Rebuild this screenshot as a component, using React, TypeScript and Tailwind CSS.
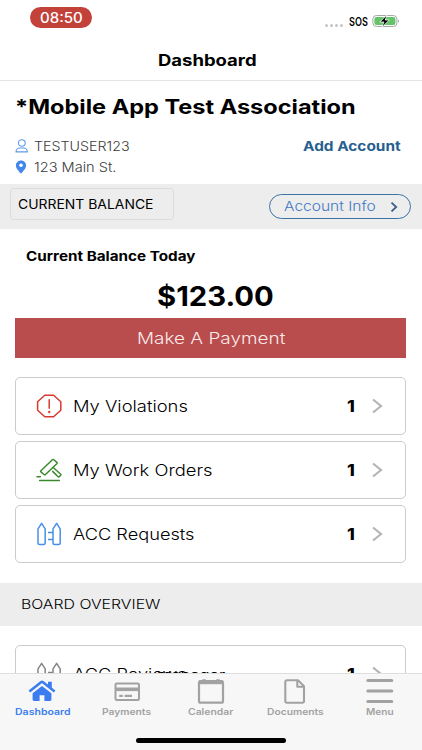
import { useLayoutEffect, useRef, useState } from 'react';
import type { ReactNode } from 'react';

// Extended-width text: stretches its content horizontally to fill `width` px.
function Wide({ width, className = '', children }: {
  width: number;
  className?: string;
  children: ReactNode;
}) {
  const ref = useRef<HTMLSpanElement>(null);
  const [scale, setScale] = useState(1);

  useLayoutEffect(() => {
    if (ref.current) setScale(width / ref.current.offsetWidth);
  }, [width]);

  return (
    <span className={`block shrink-0 text-left whitespace-nowrap ${className}`} style={{ width }}>
      <span ref={ref} className="inline-block origin-left" style={{ transform: `scaleX(${scale})` }}>
        {children}
      </span>
    </span>
  );
}

const rows = [
  { label: 'My Violations', width: 115, count: 1, icon: <ViolationIcon /> },
  { label: 'My Work Orders', width: 140, count: 1, icon: <GavelIcon /> },
  { label: 'ACC Requests', width: 121, count: 1, icon: <FenceIcon className="text-[#4a8fe7]" /> },
];

const tabs = [
  { label: 'Dashboard', width: 55, active: true, icon: <HomeIcon /> },
  { label: 'Payments', width: 49, icon: <CardIcon /> },
  { label: 'Calendar', width: 45, icon: <CalendarIcon /> },
  { label: 'Documents', width: 57, icon: <DocumentIcon /> },
  { label: 'Menu', width: 28, icon: <MenuIcon /> },
];

export default function App() {
  return (
    <div className="flex h-[750px] w-[422px] flex-col overflow-hidden bg-white font-['Inter',sans-serif] text-black">
      <StatusBar />
      <header className="flex h-[41px] shrink-0 items-center justify-center border-b border-[#e4e4e4] pt-px pr-[7px]">
        <Wide width={99} className="text-[15.5px] leading-5 font-bold">Dashboard</Wide>
      </header>

      <main className="min-h-0 flex-1 overflow-hidden">
        <section className="h-[103px] pt-[14px] pr-[21px] pl-[15px]">
          <Wide width={341} className="text-[20px] leading-6 font-bold">*Mobile App Test Association</Wide>
          <div className="mt-[17px] flex h-5 items-center justify-between">
            <div className="flex items-center gap-[6px]">
              <UserIcon />
              <Wide width={96} className="text-[13.5px] leading-5 font-[350] text-[#3c3c3c]">TESTUSER123</Wide>
            </div>
            <Wide width={98} className="text-[13.5px] leading-5 font-bold text-[#27608f]">Add Account</Wide>
          </div>
          <div className="flex h-[21px] items-center gap-[6px]">
            <PinIcon />
            <Wide width={82} className="text-[13.5px] leading-5 font-[350] text-[#3c3c3c]">123 Main St.</Wide>
          </div>
        </section>

        <section className="flex h-[45px] items-center justify-between bg-[#ededed] pr-[11px] pl-[10px]">
          <div className="mb-[5px] flex h-8 w-[164px] items-center rounded-[4px] border border-[#dcdcdc] pl-[7px]">
            <Wide width={135} className="text-[13px] leading-5">CURRENT BALANCE</Wide>
          </div>
          <button className="flex h-[25px] w-[142px] items-center justify-between rounded-full border border-[#3b74a8] pr-[12px] pl-[14px]">
            <Wide width={92} className="mb-px text-[13.5px] leading-5 font-light text-[#3f78c4]">Account Info</Wide>
            <svg className="h-[10px] w-[8px]" viewBox="0 0 8 10" fill="none" stroke="#3c6187" strokeWidth="1.8">
              <path d="M1.5 .6 6.200 5 1.500 9.400" />
            </svg>
          </button>
        </section>

        <section className="px-[15px] pt-[17px]">
          <Wide width={170} className="ml-[10.5px] text-[13px] leading-5 font-bold">Current Balance Today</Wide>
          <Wide width={117} className="mt-[14px] ml-[142px] text-[27.5px] leading-8 font-bold">$123.00</Wide>
          <button className="mt-[6px] flex h-10 w-[391px] items-center justify-center bg-[#b94c4d]">
            <Wide width={148} className="text-[16px] leading-6 font-light text-[#fbeaea]">Make A Payment</Wide>
          </button>
          <div className="mt-[19px] flex flex-col gap-[6px]">
            {rows.map((row) => (
              <Row key={row.label} icon={row.icon} count={row.count}>
                <Wide width={row.width} className="text-[15.5px] leading-6 font-[350]">{row.label}</Wide>
              </Row>
            ))}
          </div>
        </section>

        <section className="mt-5 flex h-[43px] items-center bg-[#ededed] pb-px pl-[20.5px]">
          <Wide width={139} className="text-[13px] leading-5 font-light">BOARD OVERVIEW</Wide>
        </section>

        <section className="px-[15px] pt-[19px]">
          <Row icon={<FenceIcon className="text-[#858585]" />} count={1}>
            <div className="relative">
              <Wide width={114} className="text-[15.5px] leading-6 font-[350]">ACC Reviews</Wide>
              <Wide width={68} className="absolute top-0 left-[84px] text-[13px] leading-6">manager</Wide>
            </div>
          </Row>
        </section>
      </main>

      <TabBar />
    </div>
  );
}

function StatusBar() {
  return (
    <div className="flex h-[40px] shrink-0 items-start justify-between pt-[7px] pr-[22px] pl-[30px]">
      <div className="flex h-[21px] w-[62px] items-center justify-center rounded-full bg-[#c2423a]">
        <Wide width={43} className="text-[14px] leading-5 font-medium text-white">08:50</Wide>
      </div>
      <div className="mt-[4px] flex h-5 items-center">
        <div className="mt-[8px] flex gap-[2px]">
          {[0, 1, 2, 3].map((i) => (
            <span key={i} className="h-[3px] w-[3px] rounded-full bg-[#c4c4c4]" />
          ))}
        </div>
        <Wide width={19} className="ml-[6px] pt-px text-[11.5px] leading-5 font-semibold">SOS</Wide>
        <svg className="ml-[4px] h-[14px] w-[28px]" viewBox="0 0 28 14">
          <rect x="0.9" y="1.5" width="24" height="11" rx="3.5" fill="#fff" stroke="#a5a9a5" />
          <rect x="2.4" y="3" width="21" height="8" rx="2" fill="#62c466" />
          <path d="M26 5.2c1.300.5 1.300 3.100 0 3.600z" fill="#a5a9a5" />
          <path d="M15 .8 7.800 8h4l-1.800 5.300L17.300 6h-4z" fill="#000" stroke="#fff" strokeWidth=".8" />
        </svg>
      </div>
    </div>
  );
}

function Row({ icon, count, children }: { icon: ReactNode; count: number; children: ReactNode }) {
  return (
    <div className="flex h-[58px] w-[391px] items-center rounded-[5px] border border-[#cbcbcb] pr-[22px] pl-[19.5px]">
      <div className="mr-[10px] flex w-[27px] justify-center">{icon}</div>
      <div className="mt-px">{children}</div>
      <Wide width={8} className="mt-px ml-auto text-[15.5px] leading-6 font-extrabold">{count}</Wide>
      <svg className="ml-[16px] h-4 w-[12px]" viewBox="0 0 12 16" fill="none" stroke="#b5b5b5" strokeWidth="2.200">
        <path d="M2 1.500 10 8l-8 6.500" />
      </svg>
    </div>
  );
}

function TabBar() {
  return (
    <nav className="h-[77px] shrink-0 border-t border-[#dedede] bg-[#f7f7f7]">
      <div className="grid h-[45px] grid-cols-5">
        {tabs.map((tab) => (
          <div
            key={tab.label}
            className={`flex flex-col items-center pt-[4px] ${tab.active ? 'text-[#3b7cf0]' : 'text-[#a2a2a2]'}`}
          >
            {tab.icon}
            <Wide width={tab.width} className="text-[9px] leading-[14px] font-semibold">{tab.label}</Wide>
          </div>
        ))}
      </div>
      <div className="mx-auto mt-[19px] h-[5px] w-[150px] rounded-full bg-black" />
    </nav>
  );
}

function UserIcon() {
  return (
    <svg className="h-[14px] w-[13px]" viewBox="0 0 13 14" fill="none" stroke="#5c9bea" strokeWidth="1.100">
      <ellipse cx="6.800" cy="4" rx="3.400" ry="3.200" />
      <path d="M1 12.900c0-2.400 1.600-3.900 3.900-3.900h3.600c2.300 0 3.900 1.500 3.900 3.900z" strokeLinejoin="round" />
    </svg>
  );
}

function PinIcon() {
  return (
    <svg className="h-[14px] w-[13px]" viewBox="0 0 13 14">
      <path d="M6 .5C3 .5.900 2.700.900 5.400.900 8.300 4 11 5.400 13.100c.3.500.9.500 1.200 0C8 11 11.100 8.300 11.100 5.400 11.100 2.700 9 .5 6 .5z" fill="#4287ec" />
      <ellipse cx="6" cy="5.200" rx="1.800" ry="1.700" fill="#fff" />
    </svg>
  );
}

function ViolationIcon() {
  return (
    <svg className="h-6 w-[27px]" viewBox="0 0 27 24" fill="none" stroke="#d63a2c" strokeWidth="1.500">
      <path d="M8.800 1.200h8.800l7.200 6.500v8.600l-7.200 6.500H8.800l-7.200-6.500V7.700z" strokeLinejoin="round" />
      <path d="M13.200 5.800v8.400" strokeLinecap="round" />
      <circle cx="13.200" cy="18" r="1" fill="#d63a2c" strokeWidth=".6" />
    </svg>
  );
}

function GavelIcon() {
  return (
    <svg className="h-6 w-[27px]" viewBox="0 0 27 24" fill="none" stroke="#3a8a2c" strokeWidth="1.500" strokeLinejoin="round" strokeLinecap="round">
      <path d="M4.900 12.700 16.400 1.800q.7-.6 1.400 0l3 2.600q.7.600 0 1.300L9.500 16.500q-.7.600-1.400 0l-3.200-2.600q-.6-.6 0-1.200z" />
      <path d="M17.200 9.500 24.500 16c.6.500.6 1 0 1.500l-1 1c-.5.500-1 .5-1.600 0l-5.300-5.100" />
      <path d="M1 18.800h3.400M3.600 22.600h19.700" />
    </svg>
  );
}

function FenceIcon({ className }: { className: string }) {
  return (
    <svg className={`h-6 w-[27px] ${className}`} viewBox="0 0 27 24" fill="none" stroke="currentColor" strokeWidth="1.500" strokeLinejoin="round">
      <path d="M2 6.800 5.600 1.300l3.600 5.500v14.200c0 1-.5 1.500-1.500 1.500H3.500C2.500 22.500 2 22 2 21z" />
      <path d="M17 6.800l3.600-5.500 3.600 5.500v14.200c0 1-.5 1.500-1.500 1.500h-4.200c-1 0-1.500-.5-1.500-1.500z" />
      <path d="M12 10.500h5M12 17.500h5" />
    </svg>
  );
}

function HomeIcon() {
  return (
    <svg className="h-[27px] w-7" viewBox="0 0 28 27" fill="currentColor">
      <path d="M14 8 23.400 15.300v6.300q0 1.400-1.400 1.400h-5.600v-5.800h-4.800V23H6q-1.400 0-1.400-1.400v-6.300z" />
      <path d="M1.400 13.600 13 4.300q1-.8 2 0l11.600 9.300" fill="none" stroke="currentColor" strokeWidth="2.600" />
      <path d="M20 3.800h3.800v8.400L20 9.200z" />
    </svg>
  );
}

function CardIcon() {
  return (
    <svg className="h-[27px] w-7" viewBox="0 0 28 27" fill="none" stroke="currentColor">
      <rect x="2.500" y="5.500" width="23.500" height="16.500" rx="1.200" strokeWidth="2" />
      <path d="M2 11.300h24.500" strokeWidth="3.600" />
      <path d="M6.200 17.900h3.600M11.600 17.900h7.400" strokeWidth="2.200" />
    </svg>
  );
}

function CalendarIcon() {
  return (
    <svg className="h-[27px] w-7" viewBox="0 0 28 27" fill="none" stroke="currentColor">
      <rect x="2" y="3.200" width="24" height="21.500" rx="1.800" strokeWidth="2.200" />
      <path d="M2 4.200h24" strokeWidth="4" />
      <path d="M7 1.200v3M21 1.200v3" strokeWidth="3.400" />
    </svg>
  );
}

function DocumentIcon() {
  return (
    <svg className="h-[27px] w-7" viewBox="0 0 28 27" fill="none" stroke="currentColor" strokeWidth="2.100" strokeLinejoin="round">
      <path d="M6 2.200h11l6 6V23q0 1.700-1.700 1.700H6q-1.700 0-1.700-1.700V3.900q0-1.700 1.700-1.700z" />
      <path d="M16.300 2.500v6.300h6.500" />
    </svg>
  );
}

function MenuIcon() {
  return (
    <svg className="h-[27px] w-7" viewBox="0 0 28 27" fill="none" stroke="currentColor" strokeWidth="3" strokeLinecap="round">
      <path d="M1.800 2.500h24M1.800 13h24M1.800 23.500h24" />
    </svg>
  );
}
